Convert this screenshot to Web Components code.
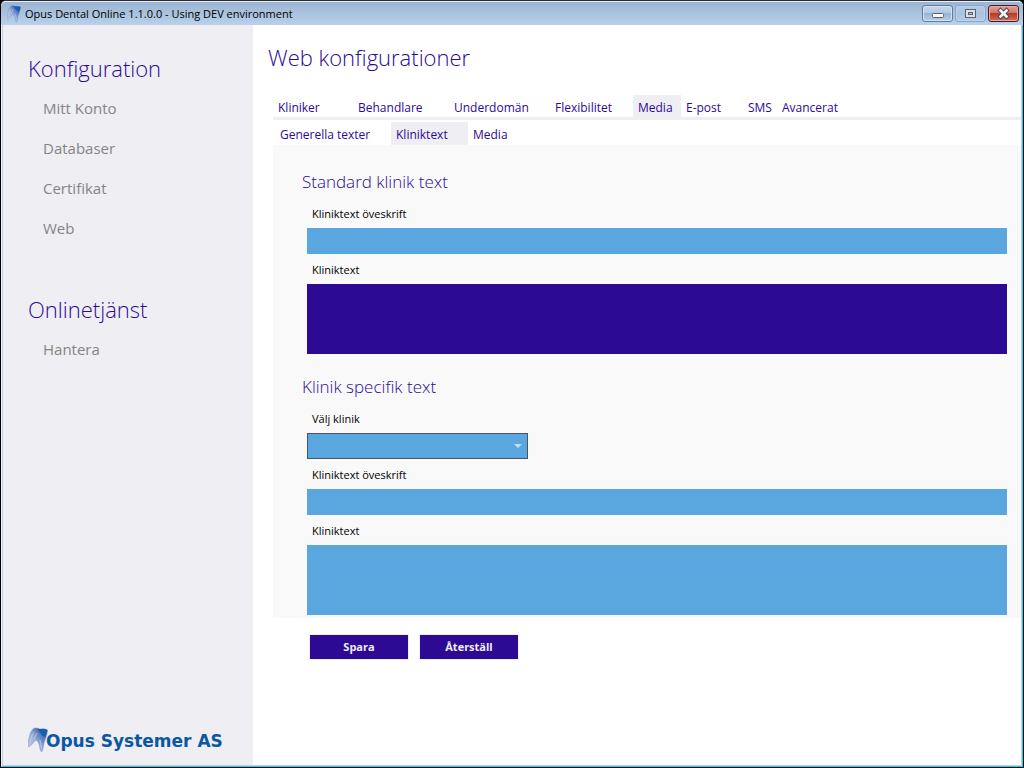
<!DOCTYPE html>
<html lang="sv">
<head>
<meta charset="utf-8">
<title>Opus Dental Online</title>
<style>
  html, body { margin: 0; height: 100%; }
  body { font-family: "Open Sans", "Noto Sans", sans-serif; background: #000; color: #000; }
</style>
</head>
<body>
<opus-window caption="Opus Dental Online 1.1.0.0 - Using DEV environment">
  <opus-sidebar slot="side">
    <opus-nav heading="Konfiguration">
      <opus-nav-item>Mitt Konto</opus-nav-item>
      <opus-nav-item>Databaser</opus-nav-item>
      <opus-nav-item>Certifikat</opus-nav-item>
      <opus-nav-item>Web</opus-nav-item>
    </opus-nav>
    <opus-nav heading="Onlinetjänst">
      <opus-nav-item>Hantera</opus-nav-item>
    </opus-nav>
    <opus-logo slot="foot"></opus-logo>
  </opus-sidebar>
  <opus-page heading="Web konfigurationer">
    <opus-tabs kind="main">
      <opus-tab style="--w:80px">Kliniker</opus-tab>
      <opus-tab style="--w:96px">Behandlare</opus-tab>
      <opus-tab style="--w:101px">Underdomän</opus-tab>
      <opus-tab style="--w:83px">Flexibilitet</opus-tab>
      <opus-tab style="--w:48px" selected>Media</opus-tab>
      <opus-tab style="--w:62px">E-post</opus-tab>
      <opus-tab style="--w:34px">SMS</opus-tab>
      <opus-tab style="--w:70px">Avancerat</opus-tab>
    </opus-tabs>
    <opus-tabs kind="sub">
      <opus-tab style="--w:116px">Generella texter</opus-tab>
      <opus-tab style="--w:77px" selected>Kliniktext</opus-tab>
      <opus-tab style="--w:60px">Media</opus-tab>
    </opus-tabs>
    <opus-panel>
      <opus-section heading="Standard klinik text">
        <opus-field type="input" label="Kliniktext öveskrift"></opus-field>
        <opus-field type="textarea" label="Kliniktext" dark></opus-field>
      </opus-section>
      <opus-section heading="Klinik specifik text">
        <opus-field type="select" label="Välj klinik"></opus-field>
        <opus-field type="input" label="Kliniktext öveskrift"></opus-field>
        <opus-field type="textarea" label="Kliniktext"></opus-field>
      </opus-section>
    </opus-panel>
    <opus-actions>
      <opus-button>Spara</opus-button>
      <opus-button>Återställ</opus-button>
    </opus-actions>
  </opus-page>
</opus-window>

<script>
const define = (name, render) => customElements.define(name, class extends HTMLElement {
  connectedCallback() {
    if (this.shadowRoot) return;
    this.attachShadow({ mode: "open" }).innerHTML = render(this);
  }
});

define("opus-tooth", () => `
  <style>:host{display:block} svg{display:block;width:100%;height:100%}</style>
  <svg viewBox="0 0 20 26" aria-hidden="true">
    <defs>
      <linearGradient id="g" x1="1" y1="0" x2="0" y2="1">
        <stop offset="0" stop-color="#0a58a8"/><stop offset=".3" stop-color="#4f78bc"/>
        <stop offset=".6" stop-color="#a3b3dc"/><stop offset="1" stop-color="#c8cfe8"/>
      </linearGradient>
    </defs>
    <path d="M0.500 19C0 12 2 5 5 2C8 -.5 10 2 13 2C15 1.500 18 2 19.500 3C19.500 8 17 12 16 16C15 20 15.500 23 13.500 25C11.500 23 12 19 10.500 16C9 13 7.500 13 6 15C4.500 17 3.500 18 1 20Z" fill="url(#g)" stroke="#7f93c2" stroke-width=".5"/>
    <path d="M9 1.500C12 2.500 16 1.500 19.500 3L17 10C14 9 12 6 9 1.500Z" fill="#0a5cab" opacity=".8"/>
    <path d="M6 5C4 8 3 11 2.500 15M9 6C8 8 7 10 6 12M12 13L13.500 21" stroke="#c9d2ec" stroke-width="1" fill="none" opacity=".7"/>
  </svg>`);

define("opus-window", el => `
  <style>
    :host{display:grid;grid-template-rows:auto 1fr;min-height:100vh;box-sizing:border-box;
      border:1px solid #000;border-top-color:#2b2a33;background:#fff;border-radius:6px 6px 0 0}
    header{display:flex;align-items:center;height:24px;box-sizing:border-box;border-top:1px solid #e6f0fa;
      padding:0 4px 0 6px;border-radius:5px 5px 0 0;background:linear-gradient(#9ab4d2,#b9d1ea)}
    opus-tooth{width:14px;height:18px}
    h1{flex:1;margin:0 0 0 4px;font-size:11px;font-weight:400;line-height:24px}
    .buttons{display:flex;gap:2px}
    button{padding:0;width:31px;height:17px;border:1px solid #5f7b9f;border-radius:3px;
      background:linear-gradient(#c4d6ea,#b4cae3 45%,#98b4d4 50%,#b4cfea);box-shadow:inset 0 0 0 1px #d5e3f2}
    button.max{border-color:#8aa4c5;background:linear-gradient(#b5cbe4,#a9c2de 50%,#b4cce7);box-shadow:inset 0 0 0 1px #bdd1e8}
    button.close{border-color:#4d1a24;background:linear-gradient(#dea093,#cf7868 45%,#b83a22 50%,#d0705a);box-shadow:inset 0 0 0 1px #e4aca4}
    svg{display:block;margin:auto}
    .body{display:flex;border:solid;border-width:0 1px 1px;border-color:#2fc9e8;border-left-color:#f4f8fc;}
    .inner{flex:1;display:flex;min-width:0;border:1px solid #b9d1ea;border-top:0}
    .main{flex:1;min-width:0}
    .side{display:flex}
  </style>
  <header>
    <opus-tooth></opus-tooth><h1>${el.getAttribute("caption")}</h1>
    <div class="buttons">
      <button aria-label="Minimera"><svg width="12" height="13" viewBox="0 0 12 13"><rect x=".5" y="6.500" width="11" height="4" rx="1" fill="#fff" stroke="#5a6070"/></svg></button>
      <button class="max" aria-label="Maximera"><svg width="11" height="13" viewBox="0 0 11 13"><rect x=".5" y="2.500" width="10" height="8" fill="#dfdfe4" stroke="#5a6275"/><rect x="3.500" y="5.500" width="4" height="2" fill="#a9c0dc" stroke="#5a6275"/></svg></button>
      <button class="close" aria-label="Stäng"><svg width="13" height="13" viewBox="0 0 13 13"><path d="M3.500 3.500L9.500 9.500M9.500 3.500L3.500 9.500" stroke="#4d4a5c" stroke-width="4.500" stroke-linecap="square"/><path d="M3.500 3.500L9.500 9.500M9.500 3.500L3.500 9.500" stroke="#f4f4f6" stroke-width="2.500" stroke-linecap="square"/></svg></button>
    </div>
  </header>
  <div class="body"><div class="inner"><div class="side"><slot name="side"></slot></div><div class="main"><slot></slot></div></div></div>`);

define("opus-sidebar", () => `
  <style>
    :host{display:flex;flex-direction:column;justify-content:space-between;width:250px;box-sizing:border-box;
      padding:23px 0 12px 25px;background:#efeef3}
    .navs{display:grid;gap:41px}
  </style>
  <div class="navs"><slot></slot></div><slot name="foot"></slot>`);

define("opus-nav", el => `
  <style>
    :host{display:block}
    h2{margin:0;font-size:22px;font-weight:300;line-height:40px;color:#2d0a93}
    nav{display:grid;padding-left:15px}
  </style>
  <h2>${el.getAttribute("heading")}</h2><nav><slot></slot></nav>`);

define("opus-nav-item", () => `
  <style>
    :host{display:block}
    a{display:block;font-size:15px;line-height:40px;color:#858585;text-decoration:none}
  </style>
  <a href="#"><slot></slot></a>`);

define("opus-logo", () => `
  <style>
    :host{display:flex;align-items:flex-end}
    opus-tooth{width:20px;height:26px}
    span{font:bold 17px/24px "DejaVu Sans",sans-serif;color:#0a57a4;white-space:nowrap;margin-left:-2px}
  </style>
  <opus-tooth></opus-tooth><span>Opus Systemer AS</span>`);

define("opus-page", el => `
  <style>
    :host{display:block;padding:12px 0 0 20px}
    h2{margin:0 0 18px -5px;font-size:22px;font-weight:300;line-height:40px;color:#2d0a93}
  </style>
  <h2>${el.getAttribute("heading")}</h2><slot></slot>`);

define("opus-tabs", () => `
  <style>
    :host{display:flex}
    :host([kind=main]){height:22px;border-bottom:3px solid #efeef3;--tab-top:4px}
    :host([kind=sub]){height:23px;padding:2px 0 0 2px;--tab-top:2px}
  </style>
  <slot></slot>`);

define("opus-tab", () => `
  <style>
    :host{display:flex;width:var(--w)}
    button{flex:1;min-width:0;padding:var(--tab-top) 0 0 5px;border:0;background:none;text-align:left;white-space:nowrap;
      font:inherit;font-size:12px;line-height:18px;color:#2d0a93}
    :host([selected]) button{background:#efeef3}
  </style>
  <button><slot></slot></button>`);

define("opus-panel", () => `
  <style>:host{display:grid;gap:17px;padding:21px 14px 3px 29px;background:#f9f9f9}</style>
  <slot></slot>`);

define("opus-section", el => `
  <style>
    :host{display:block}
    h3{margin:0;font-size:17px;font-weight:300;line-height:32px;color:#2d0a93}
    .fields{padding-left:5px}
  </style>
  <h3>${el.getAttribute("heading")}</h3><div class="fields"><slot></slot></div>`);

const control = {
  input: `<input id="c" type="text">`,
  textarea: `<textarea id="c"></textarea>`,
  select: `<div class="drop"><select id="c"><option></option></select><svg width="8" height="4" viewBox="0 0 8 4"><path d="M0 0H8L4 4Z" fill="#c3dff3"/></svg></div>`
};
define("opus-field", el => `
  <style>
    :host{display:block}
    label{display:block;padding:2px 0 0 5px;font-size:11px;line-height:28px}
    input,textarea,select{display:block;width:100%;box-sizing:border-box;margin:0;border:0;border-radius:0;
      padding:2px 5px;background:#5aa7df;font:inherit;font-size:11px;outline:0;resize:none;appearance:none}
    input,select{height:26px}
    select{border:1px solid #4d5361}
    textarea{height:70px}
    :host([dark]) textarea{background:#2d0a93;color:#fff}
    .drop{display:grid;width:221px}
    .drop>*{grid-area:1/1}
    svg{justify-self:end;align-self:center;margin-right:6px;pointer-events:none}
  </style>
  <label for="c">${el.getAttribute("label")}</label>${control[el.getAttribute("type")]}`);

define("opus-actions", () => `
  <style>:host{display:flex;gap:10px;padding:16px 0 16px 36px}</style>
  <slot></slot>`);

define("opus-button", () => `
  <style>
    :host{display:block}
    button{display:block;width:100px;height:26px;padding:0;border:1px solid #efeef3;background:#2d0a93;
      color:#efeef3;font:inherit;font-size:11px;font-weight:700;line-height:24px}
  </style>
  <button><slot></slot></button>`);
</script>
</body>
</html>
